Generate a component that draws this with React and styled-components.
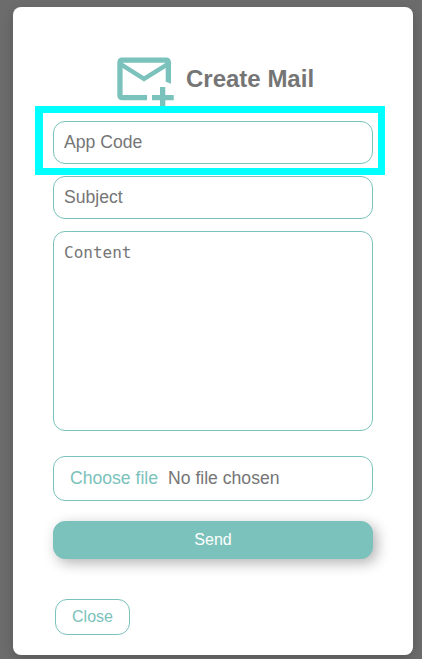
import React from "react";
import styled, { createGlobalStyle, css } from "styled-components";

const TEAL = "#7ac2bb";
const GREY = "#757575";

const GlobalStyle = createGlobalStyle`
  *, *::before, *::after { box-sizing: border-box; }
  body {
    margin: 0;
    background: #6c6c6c;
    font-family: "Liberation Sans", Arial, sans-serif;
  }
`;

const Backdrop = styled.main`
  height: 659px;
  padding: 7px 9px 4px 13px;
  overflow: hidden;
  background: #6c6c6c;
`;

const Dialog = styled.section`
  display: flex;
  flex-direction: column;
  width: 400px;
  height: 648px;
  padding: 49px 40px 20px;
  border-radius: 8px;
  background: #fff;
  box-shadow: 0 4px 12px rgba(0, 0, 0, 0.18);
`;

const Header = styled.header`
  display: flex;
  align-items: flex-start;
  gap: 12px;
  height: 65px;
  padding-left: 63px;
`;

const MailIcon = styled.svg`
  flex: none;
  width: 58px;
  height: 54px;
  color: ${TEAL};
`;

const Title = styled.h1`
  margin: 9px 0 0;
  color: ${GREY};
  font-size: 24px;
  line-height: 28px;
`;

const Form = styled.form`
  display: flex;
  flex-direction: column;
`;

const outlined = css`
  display: block;
  width: 100%;
  margin: 0;
  border: 1px solid ${TEAL};
  border-radius: 12px;
  outline: none;
  background: #fff;
  color: ${GREY};
  &::placeholder { color: ${GREY}; opacity: 1; }
`;

const TextField = styled.input`
  ${outlined}
  height: 43px;
  padding: 0 10px;
  font: 17.6px "Liberation Sans", Arial, sans-serif;
`;

const Highlighted = styled.div`
  position: relative;
  margin-bottom: 12px;
  &::after {
    content: "";
    position: absolute;
    inset: -15px -12px -11px -18px;
    border: 7px solid #00ffff;
    border-left-width: 8px;
    pointer-events: none;
  }
`;

const MessageField = styled.textarea`
  ${outlined}
  height: 200px;
  margin-top: 12px;
  padding: 11px 10px;
  resize: none;
  font: 16px/19px "DejaVu Sans Mono", monospace;
`;

const FilePicker = styled.label`
  ${outlined}
  display: flex;
  align-items: center;
  gap: 10px;
  height: 45px;
  margin-top: 25px;
  padding: 0 16px 1px;
  font-size: 17.6px;
`;

const FileAction = styled.span`
  color: ${TEAL};
`;

const Button = styled.button`
  padding: 0;
  border: 1px solid ${TEAL};
  border-radius: 12px;
  font: 16px "Liberation Sans", Arial, sans-serif;
`;

const SendButton = styled(Button)`
  height: 38px;
  margin-top: 20px;
  background: ${TEAL};
  color: #fff;
  box-shadow: 4px 4px 14px rgba(0, 0, 0, 0.3);
`;

const CloseButton = styled(Button)`
  width: 75px;
  height: 36px;
  margin: 40px 0 0 2px;
  background: #fff;
  color: ${TEAL};
`;

export default function App() {
  return (
    <>
      <GlobalStyle />
      <Backdrop>
        <Dialog>
          <Header>
            <MailIcon viewBox="0 0 58 54" fill="currentColor" aria-hidden="true">
              <path
                fillRule="evenodd"
                d="M6.5 1.5H49.7Q55 1.5 55 6.8V27.7Q52.3 26.6 49.7 25.8V12L28 25.6 6.6 12V39H31V44.3H6.5Q1.3 44.3 1.3 39V6.8Q1.3 1.5 6.5 1.5ZM6.6 6.8 28 20.3 49.7 6.8Z"
              />
              <path d="M44 31h5.3v8h8.4v5.3h-8.4V54H44v-9.7h-8V39h8z" />
            </MailIcon>
            <Title>Create Mail</Title>
          </Header>
          <Form onSubmit={(event) => event.preventDefault()}>
            <Highlighted>
              <TextField placeholder="App Code" />
            </Highlighted>
            <TextField placeholder="Subject" />
            <MessageField placeholder="Content" />
            <FilePicker>
              <FileAction>Choose file</FileAction>
              <span>No file chosen</span>
              <input type="file" hidden />
            </FilePicker>
            <SendButton type="submit">Send</SendButton>
          </Form>
          <CloseButton type="button">Close</CloseButton>
        </Dialog>
      </Backdrop>
    </>
  );
}
